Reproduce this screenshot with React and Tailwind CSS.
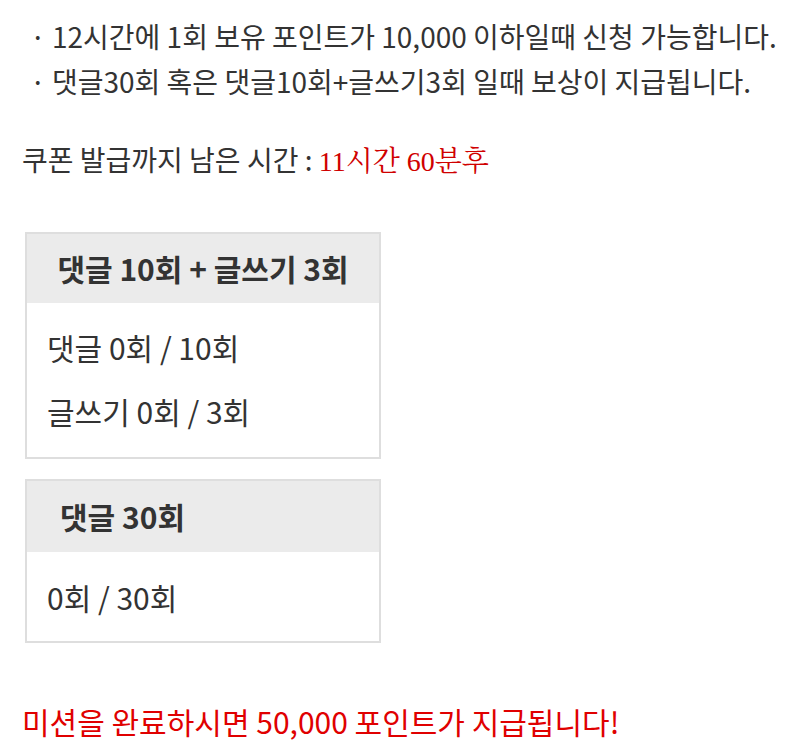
import React from "react";

const font = { fontFamily: '"Noto Sans CJK KR", "Noto Sans", sans-serif' };

const App = () => {
  return (
    <div className="bg-white min-h-[756px] w-[800px] text-[#333] pl-[22px] pt-[14px]" style={font}>
      <ul className="text-[28px] leading-[45px] pl-[8px]">
        <li>· 12시간에 1회 보유 포인트가 10,000 이하일때 신청 가능합니다.</li>
        <li>· 댓글30회 혹은 댓글10회+글쓰기3회 일때 보상이 지급됩니다.</li>
      </ul>

      <p className="text-[28px] mt-[33px] leading-[45px]">
        쿠폰 발급까지 남은 시간 :{" "}
        <span className="text-[#d00000] font-['Liberation_Serif','Noto_Serif_CJK_KR',serif]">11시간 60분후</span>
      </p>

      <div className="mt-[48px] ml-[3px] w-[356px] border-2 border-[#dedede]">
        <div className="bg-[#ebebeb] h-[69px] flex items-center justify-center text-[30px] font-bold">
          댓글 10회 + 글쓰기 3회
        </div>
        <div className="px-[20px] pt-[12px] pb-[14px] text-[30px] leading-[64px]">
          <div>댓글 0회 / 10회</div>
          <div>글쓰기 0회 / 3회</div>
        </div>
      </div>

      <div className="mt-[20px] ml-[3px] w-[356px] border-2 border-[#dedede]">
        <div className="bg-[#ebebeb] h-[71px] flex items-center pl-[33px] text-[30px] font-bold">
          댓글 30회
        </div>
        <div className="px-[20px] pt-[13px] pb-[12px] text-[30px] leading-[64px]">
          <div>0회 / 30회</div>
        </div>
      </div>

      <p className="mt-[58px] text-[30px] leading-[40px] text-[#e00000]">
        미션을 완료하시면 50,000 포인트가 지급됩니다!
      </p>
    </div>
  );
};

export default App;
